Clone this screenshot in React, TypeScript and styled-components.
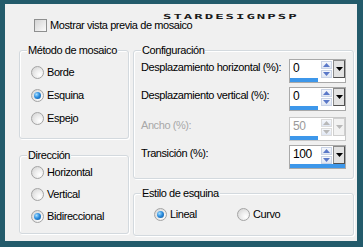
import styled, { createGlobalStyle } from 'styled-components'

const GlobalStyle = createGlobalStyle`
    html, body {
        margin: 0;
        padding: 0;
        width: 363px;
        height: 247px;
        overflow: hidden;
        background: #235b6b;
    }
    body {
        font-family: "Liberation Sans", Arial, sans-serif;
        font-size: 11px;
        letter-spacing: -0.42px;
        color: #000;
    }
`

type Spin = { label: string; value: string; fill: number; disabled?: boolean; mt: number }

const spins: Spin[] = [
    { label: 'Desplazamiento horizontal (%):', value: '0', fill: 0.5, mt: 8 },
    { label: 'Desplazamiento vertical (%):', value: '0', fill: 0.5, mt: 4 },
    { label: 'Ancho (%):', value: '50', fill: 0.5, disabled: true, mt: 6 },
    { label: 'Transición (%):', value: '100', fill: 1, mt: 4 },
]

export default function App() {
    return (
        <>
            <GlobalStyle />
            <Frame>
                <Panel>
                    <Watermark>STARDESIGNPSP</Watermark>

                    {/* top checkbox */}
                    <Header>
                        <CheckBox />
                        <OptionText>Mostrar vista previa de mosaico</OptionText>
                    </Header>

                    <Body>
                        <Column $w={110} $gap={16}>
                            <Group $h={89} $pt={10}>
                                <Legend>Método de mosaico</Legend>
                                <Radio label="Borde" h={23} />
                                <Radio label="Esquina" h={23} checked />
                                <Radio label="Espejo" h={23} />
                            </Group>
                            <Group $h={79} $pt={5}>
                                <Legend>Dirección</Legend>
                                <Radio label="Horizontal" h={22} />
                                <Radio label="Vertical" h={22} />
                                <Radio label="Bidireccional" h={22} checked />
                            </Group>
                        </Column>

                        <Column $w={221} $gap={14}>
                            <Group $h={129} $pt={0}>
                                <Legend>Configuración</Legend>
                                {spins.map(s => (
                                    <SpinRow key={s.label} style={{ marginTop: s.mt }}>
                                        <SpinLabel $disabled={s.disabled}>{s.label}</SpinLabel>
                                        <SpinBox value={s.value} fill={s.fill} disabled={s.disabled} />
                                    </SpinRow>
                                ))}
                            </Group>
                            <Group $h={43} $pt={9}>
                                <Legend>Estilo de esquina</Legend>
                                <InlineOptions>
                                    <Radio label="Lineal" h={22} checked />
                                    <Radio label="Curvo" h={22} />
                                </InlineOptions>
                            </Group>
                        </Column>
                    </Body>
                </Panel>
            </Frame>
        </>
    )
}

function Radio({ label, h, checked = false }: { label: string; h: number; checked?: boolean }) {
    return (
        <OptionRow $h={h}>
            <RadioCircle>{checked && <RadioDot />}</RadioCircle>
            <OptionText>{label}</OptionText>
        </OptionRow>
    )
}

function SpinBox({ value, fill, disabled = false }: { value: string; fill: number; disabled?: boolean }) {
    return (
        <SpinFrame $disabled={disabled}>
            <SpinTop>
                <SpinValue $disabled={disabled}>{value}</SpinValue>
                <Arrows>
                    <ArrowBtn $disabled={disabled}>
                        <svg width="7" height="4" viewBox="0 0 7 4">
                            <path d="M0 4 L3.5 0 L7 4 Z" fill={disabled ? '#b8b8b8' : '#5a78c8'} />
                        </svg>
                    </ArrowBtn>
                    <ArrowBtn $disabled={disabled}>
                        <svg width="7" height="4" viewBox="0 0 7 4">
                            <path d="M0 0 L7 0 L3.5 4 Z" fill={disabled ? '#b8b8b8' : '#5a78c8'} />
                        </svg>
                    </ArrowBtn>
                </Arrows>
                <DropBtn $disabled={disabled}>
                    <svg width="7" height="4" viewBox="0 0 7 4">
                        <path d="M0 0 L7 0 L3.5 4 Z" fill={disabled ? '#b8b8b8' : '#000'} />
                    </svg>
                </DropBtn>
            </SpinTop>
            <BarTrack>
                <BarFill style={{ width: `${fill * 100}%` }} />
            </BarTrack>
        </SpinFrame>
    )
}

/* ===========================
   styled-components
   =========================== */

const Frame = styled.div`
    width: 363px;
    height: 247px;
    box-sizing: border-box;
    padding: 4px 6px 6px 5px;
    background: #235b6b;
`

const Panel = styled.div`
    position: relative;
    width: 352px;
    height: 237px;
    background: #f0f0f0;
`

const Watermark = styled.div`
    position: absolute;
    left: 158px;
    top: 10px;
    font-family: "DejaVu Sans Mono", monospace;
    font-size: 7px;
    font-weight: bold;
    line-height: 7px;
    letter-spacing: 1px;
    color: #1a1a1a;
    transform: scaleX(2);
    transform-origin: left top;
    white-space: nowrap;
`

const Header = styled.div`
    display: flex;
    align-items: flex-start;
    gap: 3px;
    height: 46px;
    box-sizing: border-box;
    padding: 15px 0 0 29px;
`

const CheckBox = styled.div`
    width: 13px;
    height: 13px;
    box-sizing: border-box;
    border: 1px solid #8e8f8f;
    background: linear-gradient(135deg, #d4d4d4, #fbfbfb);
`

const Body = styled.div`
    display: flex;
    gap: 4px;
    padding-left: 14px;
`

const Column = styled.div<{ $w: number; $gap: number }>`
    display: flex;
    flex-direction: column;
    width: ${p => p.$w}px;
    gap: ${p => p.$gap}px;
`

const Group = styled.div<{ $h: number; $pt: number }>`
    position: relative;
    box-sizing: border-box;
    height: ${p => p.$h}px;
    padding-top: ${p => p.$pt}px;
    border: 1px solid #d3d9de;
    border-radius: 3px;
    box-shadow: 1px 1px 0 #ffffff, inset 1px 1px 0 #ffffff;
`

const Legend = styled.span`
    position: absolute;
    top: -7px;
    left: 7px;
    padding: 0 1px;
    line-height: 13px;
    background: #f0f0f0;
    white-space: nowrap;
`

const OptionRow = styled.div<{ $h: number }>`
    display: flex;
    align-items: center;
    gap: 3px;
    height: ${p => p.$h}px;
    padding-left: 11px;
`

const InlineOptions = styled.div`
    display: grid;
    grid-template-columns: 83px auto;
    padding-left: 9px;
`

const RadioCircle = styled.div`
    display: flex;
    align-items: center;
    justify-content: center;
    width: 13px;
    height: 13px;
    box-sizing: border-box;
    border-radius: 50%;
    border: 1px solid #a4a4a4;
    background: radial-gradient(circle at 70% 70%, #ffffff 0%, #ececec 45%, #cfcfcf 100%);
`

const RadioDot = styled.div`
    width: 7px;
    height: 7px;
    border-radius: 50%;
    background: radial-gradient(circle at 35% 35%, #a8e0ff 0%, #2d8ee0 45%, #0b4f92 100%);
`

const OptionText = styled.span`
    line-height: 13px;
    white-space: nowrap;
`

const SpinRow = styled.div`
    display: flex;
    align-items: flex-start;
    height: 24px;
    padding: 0 7px;
`

const SpinLabel = styled.span<{ $disabled?: boolean }>`
    flex: 1;
    padding-top: 2px;
    line-height: 13px;
    white-space: nowrap;
    color: ${p => (p.$disabled ? '#a8a8a8' : '#000')};
`

const SpinFrame = styled.div<{ $disabled?: boolean }>`
    display: flex;
    flex-direction: column;
    width: 57px;
    height: 24px;
    box-sizing: border-box;
    border: 1px solid ${p => (p.$disabled ? '#c8c8c8' : '#a9a9a9')};
    background: #fff;
`

const SpinTop = styled.div`
    display: flex;
    height: 18px;
`

const SpinValue = styled.div<{ $disabled?: boolean }>`
    flex: 1;
    padding: 1px 0 0 3px;
    font-size: 12px;
    line-height: 14px;
    color: ${p => (p.$disabled ? '#9a9a9a' : '#000')};
`

const Arrows = styled.div`
    display: flex;
    flex-direction: column;
    gap: 1px;
    width: 11px;
    padding: 1px 1px 0 0;
`

const ArrowBtn = styled.div<{ $disabled?: boolean }>`
    display: flex;
    align-items: center;
    justify-content: center;
    height: 8px;
    box-sizing: border-box;
    border: 1px solid ${p => (p.$disabled ? '#dcdcdc' : '#c9d3e6')};
    background: linear-gradient(#f6f8fc, #dfe6f3);
`

const DropBtn = styled.div<{ $disabled?: boolean }>`
    display: flex;
    align-items: center;
    justify-content: center;
    width: 12px;
    box-sizing: border-box;
    border: 1px solid ${p => (p.$disabled ? '#cfcfcf' : '#505050')};
    border-top-color: ${p => (p.$disabled ? '#cfcfcf' : '#8a8a8a')};
    border-left-color: ${p => (p.$disabled ? '#cfcfcf' : '#8a8a8a')};
    background: ${p => (p.$disabled ? '#f2f2f2' : '#e2e2e2')};
`

const BarTrack = styled.div`
    flex: 1;
    display: flex;
    background: #fff;
`

const BarFill = styled.div`
    height: 100%;
    background: #3d97ea;
`
